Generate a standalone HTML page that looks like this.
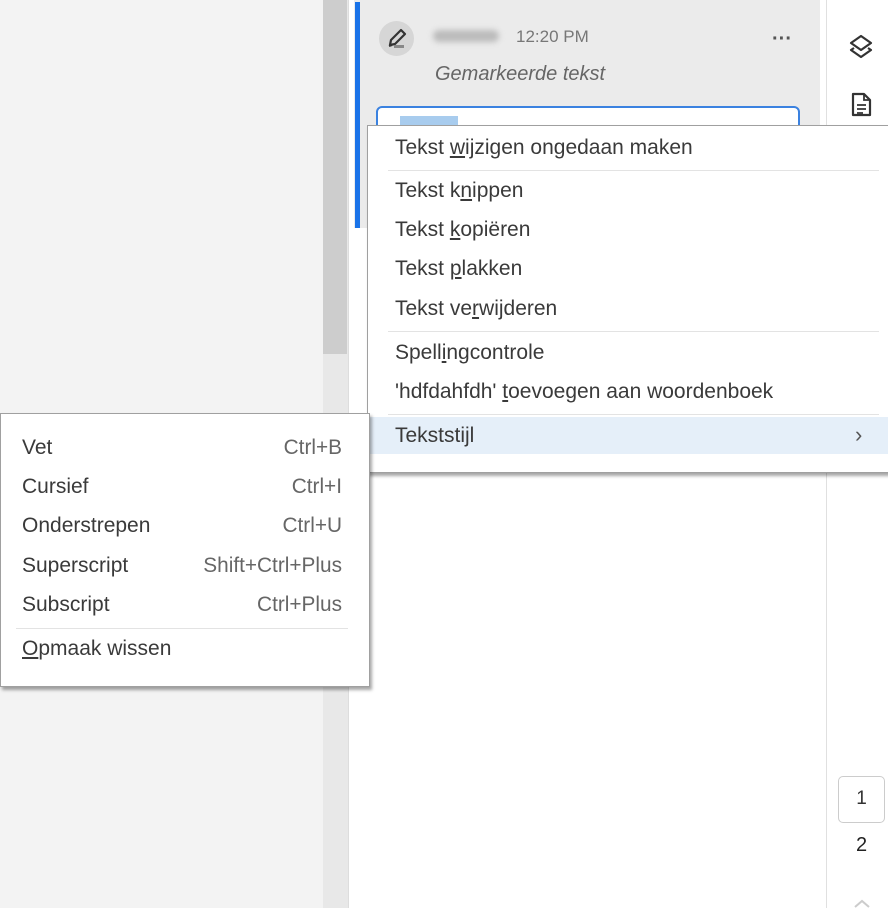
<!DOCTYPE html>
<html><head><meta charset="utf-8"><style>
*{margin:0;padding:0;box-sizing:border-box}
body{width:888px;height:908px;overflow:hidden;background:#fff;font-family:"Liberation Sans",Arial,sans-serif;color:#333;position:relative}
.a{position:absolute}
.menu{position:absolute;background:#fff;border:1px solid #a0a0a0;box-shadow:2px 3px 3px rgba(0,0,0,.35)}
.it{position:absolute;font-size:21px;line-height:24px;white-space:nowrap;color:#3a3a3a}
.sc{position:absolute;right:0;font-size:20.8px;line-height:24px;color:#666;text-align:right}
.sep{position:absolute;height:1px;background:#e3e3e3}
u{text-decoration:underline;text-underline-offset:2px}
</style></head><body>
<div class="a" style="left:0;top:0;width:323px;height:908px;background:#f3f3f3"></div>
<div class="a" style="left:323px;top:0;width:25px;height:908px;background:#e8e8e8"></div>
<div class="a" style="left:323px;top:0;width:24px;height:354px;background:#cdcdcd"></div>
<div class="a" style="left:348px;top:0;width:1px;height:908px;background:#ddd"></div>
<div class="a" style="left:826px;top:0;width:1px;height:908px;background:#e0e0e0"></div>
<div class="a" style="left:354px;top:0;width:466px;height:228px;background:#ebebeb"></div>
<div class="a" style="left:355px;top:2px;width:5px;height:226px;background:#1a73e8"></div>
<div class="a" style="left:379px;top:21px;width:35px;height:35px;border-radius:50%;background:#d6d6d6"></div>
<svg class="a" style="left:384px;top:26px" width="26" height="26" viewBox="0 0 26 26"><path d="M17 4l4 4-10 10-5 1 1-5z" fill="none" stroke="#333" stroke-width="2.2" stroke-linejoin="round"/><path d="M5 20l3 -1" stroke="#333" stroke-width="2"/><rect x="10" y="19" width="10" height="3" fill="#888"/></svg>
<div class="a" style="left:433px;top:30px;width:66px;height:12px;border-radius:6px;background:#bbb;filter:blur(3px)"></div>
<div class="a" style="left:516px;top:27px;font-size:17px;color:#777">12:20 PM</div>
<div class="a" style="left:772px;top:28px;font-size:20px;color:#555;letter-spacing:0px;font-weight:bold">···</div>
<div class="a" style="left:435px;top:63px;font-size:20px;font-style:italic;color:#666">Gemarkeerde tekst</div>
<div class="a" style="left:376px;top:106px;width:424px;height:40px;background:#fff;border:2px solid #3b82e0;border-radius:6px"></div>
<div class="a" style="left:400px;top:116px;width:58px;height:12px;background:#a8ccee"></div>
<svg class="a" style="left:848px;top:33px" width="26" height="28" viewBox="0 0 26 28"><path d="M13 3L23 10 13 17 3 10z" fill="none" stroke="#333" stroke-width="2.2" stroke-linejoin="round"/><path d="M6 15L3 17 13 24 23 17 20 15" fill="none" stroke="#333" stroke-width="2.2" stroke-linejoin="round"/></svg>
<svg class="a" style="left:850px;top:91px" width="24" height="28" viewBox="0 0 24 28"><path d="M3 3h11l6 6v15H3z" fill="none" stroke="#333" stroke-width="2.2" stroke-linejoin="round"/><path d="M14 3v6h6M7 14h9M7 18h9M7 22h6" fill="none" stroke="#333" stroke-width="1.8"/></svg>
<div class="a" style="left:838px;top:776px;width:47px;height:47px;border:1px solid #ccc;border-radius:5px;font-size:19px;text-align:center;line-height:44px;color:#333">1</div>
<div class="a" style="left:838px;top:834px;width:47px;font-size:20px;text-align:center;color:#222">2</div>
<svg class="a" style="left:853px;top:898px" width="18" height="10"><path d="M2 9l7-6 7 6" fill="none" stroke="#ccc" stroke-width="2"/></svg>
<div class="menu" style="left:367px;top:125px;width:525px;height:348px">
<div class="it" style="left:27px;top:10px">Tekst <u>w</u>ijzigen ongedaan maken</div>
<div class="sep" style="left:20px;right:12px;top:44px"></div>
<div class="it" style="left:27px;top:53px">Tekst k<u>n</u>ippen</div>
<div class="it" style="left:27px;top:92px">Tekst <u>k</u>opiëren</div>
<div class="it" style="left:27px;top:131px">Tekst <u>p</u>lakken</div>
<div class="it" style="left:27px;top:171px">Tekst ve<u>r</u>wijderen</div>
<div class="sep" style="left:20px;right:12px;top:205px"></div>
<div class="it" style="left:27px;top:215px">Spell<u>i</u>ngcontrole</div>
<div class="it" style="left:27px;top:254px">'hdfdahfdh' <u>t</u>oevoegen aan woordenboek</div>
<div class="sep" style="left:20px;right:12px;top:288px"></div>
<div class="a" style="left:0;right:0;top:291px;height:37px;background:#e5eff9"></div>
<div class="it" style="left:27px;top:298px">Tekststijl</div>
<div class="it" style="left:487px;top:297px;color:#555;font-size:22px">›</div>
</div>
<div class="menu" style="left:0;top:413px;width:370px;height:274px">
<div class="it" style="left:21px;top:22px;width:320px">Vet<span class="sc">Ctrl+B</span></div>
<div class="it" style="left:21px;top:61px;width:320px">Cursief<span class="sc">Ctrl+I</span></div>
<div class="it" style="left:21px;top:100px;width:320px">Onderstrepen<span class="sc">Ctrl+U</span></div>
<div class="it" style="left:21px;top:140px;width:320px">Superscript<span class="sc">Shift+Ctrl+Plus</span></div>
<div class="it" style="left:21px;top:179px;width:320px">Subscript<span class="sc">Ctrl+Plus</span></div>
<div class="sep" style="left:15px;width:332px;top:214px"></div>
<div class="it" style="left:21px;top:223px"><u>O</u>pmaak wissen</div>
</div>
</body></html>
